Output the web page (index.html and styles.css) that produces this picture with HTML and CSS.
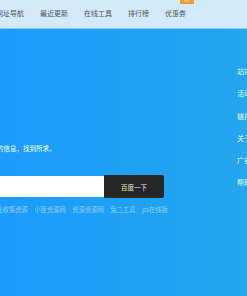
FILE: index.html
```html
<!DOCTYPE html>
<html lang="zh-CN">
<head>
    <meta charset="UTF-8">
    <meta name="viewport" content="width=device-width, initial-scale=1.0">
    <title>网址导航</title>
    <link rel="stylesheet" href="styles.css">
</head>
<body>
    <div class="header">
        <ul class="nav">
            <li>网址导航</li>
            <li>最近更新</li>
            <li>在线工具</li>
            <li>排行榜</li>
            <li class="has-badge">优惠券<span class="badge">HOT</span></li>
        </ul>
    </div>
    <div class="main">
        <div class="search-area">
            <p class="slogan">的信息，找到所求。</p>
            <form class="search-form">
                <input type="text" class="search-input">
                <button type="submit" class="search-btn">百度一下</button>
            </form>
            <div class="links">
                <a href="#">网址收集资源</a>
                <a href="#">小匪资源网</a>
                <a href="#">资源资源网</a>
                <a href="#">兔二工具</a>
                <a href="#">ps在线版</a>
            </div>
        </div>
        <ul class="side">
            <li>站内信</li>
            <li>活动中心</li>
            <li>链接</li>
            <li>关于我们</li>
            <li>广告合作</li>
            <li>帮助中心</li>
        </ul>
    </div>
</body>
</html>
```

FILE: styles.css
```css
body {
    margin: 0;
    padding: 0;
    width: 247px;
    height: 296px;
    overflow: hidden;
    font-family: "Noto Sans CJK SC", "Noto Sans", sans-serif;
}

ul {
    list-style: none;
    margin: 0;
    padding: 0;
}

.header {
    height: 28px;
    background-color: #d3eafa;
    border-bottom: 1px solid #8fcdf8;
}

.nav {
    display: flex;
    gap: 16px;
    margin-left: -4px;
    padding-top: 8px;
    font-size: 7px;
    line-height: 10px;
    color: #555;
    white-space: nowrap;
}

.has-badge {
    position: relative;
}

.badge {
    position: absolute;
    left: 15px;
    top: -9px;
    width: 14px;
    height: 5px;
    background-color: #f39a2b;
    border-radius: 1px;
    color: #fff;
    font-size: 3px;
    line-height: 5px;
    text-align: center;
}

.main {
    height: 267px;
    background: linear-gradient(to right, #1b9cfe, #23a6ec);
    display: flex;
    justify-content: space-between;
}

.search-area {
    padding-top: 114px;
}

.slogan {
    margin: 0 0 0 -3px;
    font-size: 6.5px;
    line-height: 10px;
    color: #fff;
}

.search-form {
    display: flex;
    margin-top: 22px;
    height: 23px;
}

.search-input {
    width: 104px;
    height: 21px;
    margin: 1px 0 0 0;
    padding: 0;
    border: none;
    background-color: #fff;
    box-sizing: border-box;
}

.search-btn {
    width: 60px;
    height: 23px;
    border: none;
    border-radius: 0 2px 2px 0;
    background-color: #262626;
    color: #e8e8e8;
    font-family: inherit;
    font-size: 6.5px;
    padding: 0;
}

.links {
    display: flex;
    gap: 6.5px;
    margin-top: 7px;
    margin-left: -10px;
    font-size: 6.3px;
    line-height: 10px;
    white-space: nowrap;
}

.links a {
    color: #92cdf6;
    text-decoration: none;
}

.side {
    display: flex;
    flex-direction: column;
    gap: 12.3px;
    padding-top: 37px;
    width: 10px;
    font-size: 7px;
    line-height: 10px;
    color: #eaf5fd;
    white-space: nowrap;
}
```
